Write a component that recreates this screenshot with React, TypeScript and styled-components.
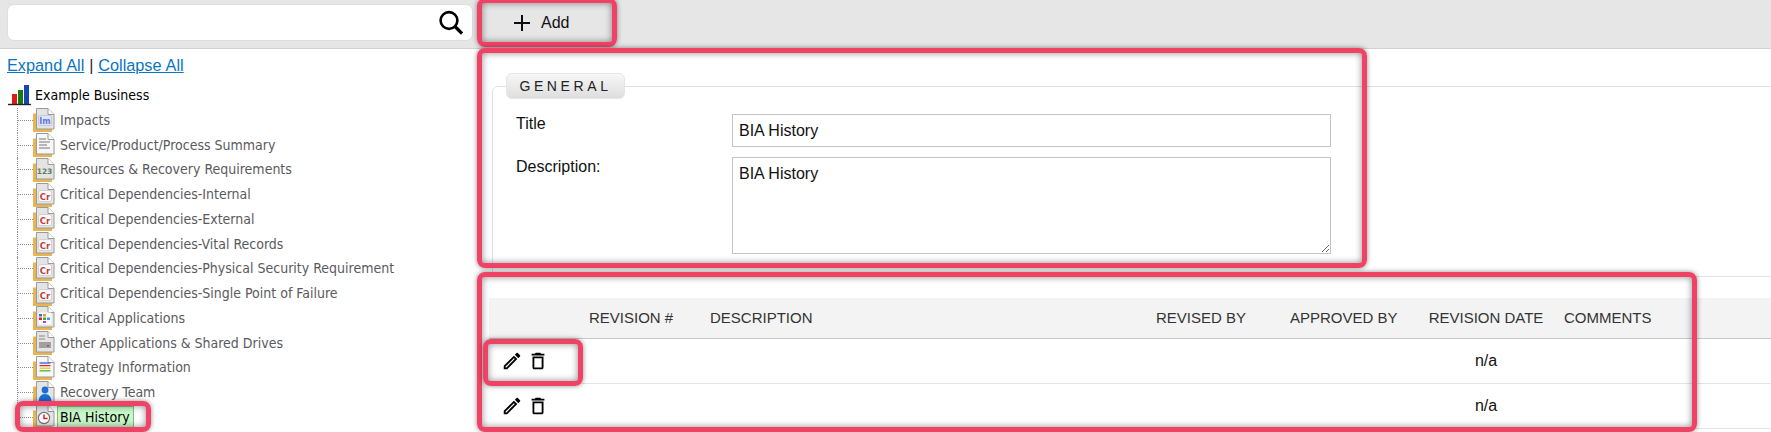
import React from 'react';
import styled, { createGlobalStyle } from 'styled-components';
import { MdOutlineEdit, MdOutlineDelete } from 'react-icons/md';

type IconKind =
  | 'impacts'
  | 'summary'
  | 'numbers'
  | 'critical'
  | 'apps'
  | 'drive'
  | 'strategy'
  | 'team'
  | 'history';

const GlobalStyle = createGlobalStyle`
  html, body {
    margin: 0;
    padding: 0;
    background: #fff;
  }
  * {
    box-sizing: border-box;
  }
`;

const Page = styled.div`
  position: relative;
  width: 1771px;
  height: 432px;
  overflow: hidden;
  background: #fff;
  color: #111;
  font-family: 'Liberation Sans', Arial, sans-serif;
  font-size: 16px;
`;

const Toolbar = styled.div`
  display: flex;
  align-items: center;
  height: 49px;
  background: #e6e6e6;
  border-bottom: 1px solid #d2d2d2;
`;

const SearchBox = styled.div`
  display: flex;
  align-items: center;
  width: 466px;
  height: 37px;
  margin: 0 0 4px 7px;
  padding: 0 9px 0 8px;
  background: #fff;
  border: 1px solid #dedede;
  border-radius: 7px;
`;

const SearchInput = styled.input`
  flex: 1;
  min-width: 0;
  border: 0;
  outline: 0;
  font: inherit;
  background: transparent;
`;

const AddButton = styled.button`
  display: flex;
  align-items: center;
  gap: 10px;
  margin: 0 0 2px 40px;
  padding: 0;
  border: 0;
  background: transparent;
  color: #111;
  font: inherit;
`;

const Body = styled.div`
  display: grid;
  grid-template-columns: 478px 1fr;
`;

const Sidebar = styled.aside`
  padding: 7px 0 0 0;
`;

const TreeLinks = styled.div`
  height: 20px;
  padding-left: 7px;
  line-height: 19px;
  color: #222;
  word-spacing: 0.4px;
`;

const TreeLink = styled.a`
  color: #0b74c4;
  font-size: 16.3px;
  text-decoration: underline;
`;

const TreeRoot = styled.div`
  display: flex;
  align-items: center;
  gap: 4px;
  height: 26px;
  margin-top: 6px;
  padding-left: 8px;
  color: #000;
`;

const TreeLabel = styled.span<{ $selected?: boolean }>`
  display: inline-block;
  height: 23px;
  padding: 0 3px 0 ${({ $selected }) => ($selected ? '2px' : '4px')};
  margin-left: ${({ $selected }) => ($selected ? '2px' : '0')};
  border: 1px solid ${({ $selected }) => ($selected ? '#7cc47c' : 'transparent')};
  background: ${({ $selected }) => ($selected ? '#c8f7c8' : 'transparent')};
  color: ${({ $selected }) => ($selected ? '#000' : '#5a5a5e')};
  line-height: 21px;
  white-space: nowrap;
  font-family: 'DejaVu Sans', sans-serif;
  font-stretch: condensed;
  font-size: 14px;
`;

const RootLabel = styled.span`
  font-family: 'DejaVu Sans', sans-serif;
  font-stretch: condensed;
  font-size: 14px;
`;

const TreeList = styled.ul`
  list-style: none;
  margin: 0 0 0 17px;
  padding: 0;
`;

const TreeRow = styled.li<{ $last?: boolean }>`
  display: flex;
  align-items: center;
  height: 24.75px;
  border-left: 1px dotted ${({ $last }) => ($last ? 'transparent' : '#8f8f8f')};
`;

const Connector = styled.span`
  width: 15px;
  height: 0;
  border-top: 1px dotted #8f8f8f;
`;

const Content = styled.main`
  min-width: 0;
`;

const General = styled.fieldset`
  margin: 24px -20px 0 14px;
  padding: 0 0 0 23px;
  height: 204px;
  border: 1px solid #e2e2e2;
  border-radius: 6px 0 0 0;
`;

const GeneralLegend = styled.legend`
  width: 119px;
  height: 26px;
  margin: 0 auto 0 -10px;
  padding: 0;
  background: linear-gradient(#f7f7f7, #dedede);
  border: 1px solid #e6e6e6;
  border-radius: 6px;
  color: #222;
  font-size: 14px;
  letter-spacing: 3.6px;
  line-height: 24px;
  text-align: center;
`;

const FormGrid = styled.div`
  display: grid;
  grid-template-columns: 216px 599px;
  grid-auto-rows: auto;
  row-gap: 10px;
  margin-top: 15px;
`;

const FieldLabel = styled.label`
  padding-top: 1px;
  line-height: 17px;
  color: #111;
`;

const TextInput = styled.input`
  width: 599px;
  height: 33px;
  padding: 0 6px;
  border: 1px solid #c4c4c4;
  outline: 0;
  color: #111;
  font: inherit;
`;

const TextArea = styled.textarea`
  display: block;
  width: 599px;
  height: 97px;
  padding: 7px 6px;
  border: 1px solid #c4c4c4;
  outline: 0;
  color: #111;
  font: inherit;
  line-height: 18px;
`;

const Table = styled.table`
  width: 1300px;
  margin: 21px 0 0 11px;
  table-layout: fixed;
  border-collapse: collapse;
`;

const HeadCell = styled.th<{ $width: number; $pad?: number; $center?: boolean }>`
  width: ${({ $width }) => $width}px;
  height: 40px;
  padding: 0 0 0 ${({ $pad }) => $pad ?? 0}px;
  background: #f3f3f3;
  border-bottom: 1px solid #c9c9c9;
  color: #333;
  font-size: 15px;
  font-weight: 400;
  text-align: ${({ $center }) => ($center ? 'center' : 'left')};
  white-space: nowrap;
`;

const Cell = styled.td<{ $center?: boolean }>`
  height: 45px;
  padding: 0;
  border-bottom: 1px solid #e4e4e4;
  color: #111;
  font-size: 16px;
  text-align: ${({ $center }) => ($center ? 'center' : 'left')};
`;

const RowActions = styled.div`
  display: flex;
  align-items: center;
  gap: 4px;
  padding-left: 12px;
  color: #000;
`;

const Callout = styled.div<{ $left: number; $top: number; $width: number; $height: number }>`
  position: absolute;
  left: ${({ $left }) => $left}px;
  top: ${({ $top }) => $top}px;
  width: ${({ $width }) => $width}px;
  height: ${({ $height }) => $height}px;
  border: 5px solid #ef4265;
  border-radius: 8px;
  box-shadow: 0 0 5px rgba(0, 0, 0, 0.45), inset 0 0 7px rgba(0, 0, 0, 0.45);
  pointer-events: none;
`;

const SearchIcon = () => (
  <svg width="26" height="28" viewBox="0 0 26 28" fill="none">
    <circle cx="12" cy="12.5" r="8.4" stroke="#000" strokeWidth="2.6" />
    <path d="M18 18.5l7 7" stroke="#000" strokeWidth="3.2" />
  </svg>
);

const PlusIcon = () => (
  <svg width="18" height="18" viewBox="0 0 18 18">
    <path d="M9 1v16M1 9h16" stroke="#0c0c14" strokeWidth="2" />
  </svg>
);

const BusinessIcon = () => (
  <svg width="23" height="21" viewBox="0 0 23 21">
    <rect x="4" y="9" width="5" height="10" fill="#e01818" />
    <rect x="10" y="5" width="5" height="14" fill="#167a16" />
    <rect x="16" y="0" width="5" height="19" fill="#1646b0" />
    <path d="M0 19.5h23" stroke="#222" strokeWidth="1.4" />
  </svg>
);

const glyphFont = "'DejaVu Sans', sans-serif";

const Glyph = ({ kind }: { kind: IconKind }) => {
  switch (kind) {
    case 'impacts':
      return (
        <>
          <rect x="5.5" y="7.5" width="13" height="10" rx="1" fill="#dfe4f8" stroke="#b8b8c8" strokeWidth="0.6" />
          <text x="12" y="15.5" fontSize="8" fontWeight="700" textAnchor="middle" fill="#6078dc" fontFamily={glyphFont}>
            Im
          </text>
        </>
      );
    case 'numbers':
      return (
        <text x="11.5" y="15.5" fontSize="7.5" fontWeight="700" textAnchor="middle" fill="#5e8060" fontFamily={glyphFont}>
          123
        </text>
      );
    case 'critical':
      return (
        <>
          <rect x="5.5" y="7.5" width="13" height="11" rx="2" fill="#fbfbfb" stroke="#c4c4c4" strokeWidth="0.7" />
          <text x="12" y="16.5" fontSize="8.5" fontWeight="700" textAnchor="middle" fill="#c44040" fontFamily={glyphFont}>
            Cr
          </text>
        </>
      );
    case 'summary':
      return <path d="M6 6h7M6 9h11M6 12h8M6 15h11" stroke="#777" strokeWidth="1" />;
    case 'apps':
      return (
        <>
          <rect x="5.5" y="6.5" width="13" height="12" rx="1" fill="#fbfbfb" />
          <rect x="6" y="8" width="3" height="2.5" fill="#3a6de0" />
          <rect x="10" y="8" width="3" height="2.5" fill="#e8a020" />
          <rect x="6" y="11.5" width="3" height="2.5" fill="#e02020" />
          <rect x="10" y="11.5" width="3" height="2.5" fill="#2fae3f" />
          <rect x="14" y="11.5" width="3" height="2.5" fill="#3aa0e0" />
          <rect x="10" y="15" width="3" height="2" fill="#c040c0" />
        </>
      );
    case 'drive':
      return (
        <>
          <path d="M6 5h6M6 8h6" stroke="#888" strokeWidth="1" />
          <rect x="6" y="11" width="12" height="6" fill="#a0a0a0" />
          <rect x="14" y="14" width="2" height="1.5" fill="#c04040" />
        </>
      );
    case 'strategy':
      return (
        <>
          <path d="M6.5 7h11" stroke="#2e62d8" strokeWidth="1.3" />
          <path d="M6.5 9.6h11" stroke="#e02828" strokeWidth="1.3" />
          <path d="M6.5 12.2h11" stroke="#f0c020" strokeWidth="1.3" />
          <path d="M6.5 14.8h11" stroke="#40b840" strokeWidth="1.3" />
        </>
      );
    case 'team':
      return (
        <>
          <circle cx="12" cy="9" r="3.4" fill="#1a6fd8" />
          <path d="M5.5 21c0-5 2.5-8 6.5-8s6.5 3 6.5 8z" fill="#1a6fd8" />
        </>
      );
    case 'history':
      return (
        <>
          <circle cx="11" cy="13" r="5.6" fill="#fff" stroke="#777" strokeWidth="1.2" />
          <path d="M11 9.6V13.4h3.6" fill="none" stroke="#e02020" strokeWidth="1.5" />
        </>
      );
  }
};

const TreeIcon = ({ kind }: { kind: IconKind }) => (
  <svg width="22" height="24" viewBox="0 0 22 24">
    <path d="M0 5.5h3V21h16v3H1a1 1 0 0 1-1-1z" fill="#e9b552" />
    <path d="M3.5.5H15l6 6V21H3.5z" fill={kind === 'summary' || kind === 'strategy' ? '#f7f7f7' : '#e4e4e4'} stroke="#9a9a9a" />
    <path d="M15 .5v6h6" fill="#fff" stroke="#9a9a9a" />
    <Glyph kind={kind} />
  </svg>
);

const treeItems: { label: string; icon: IconKind }[] = [
  { label: 'Impacts', icon: 'impacts' },
  { label: 'Service/Product/Process Summary', icon: 'summary' },
  { label: 'Resources & Recovery Requirements', icon: 'numbers' },
  { label: 'Critical Dependencies-Internal', icon: 'critical' },
  { label: 'Critical Dependencies-External', icon: 'critical' },
  { label: 'Critical Dependencies-Vital Records', icon: 'critical' },
  { label: 'Critical Dependencies-Physical Security Requirement', icon: 'critical' },
  { label: 'Critical Dependencies-Single Point of Failure', icon: 'critical' },
  { label: 'Critical Applications', icon: 'apps' },
  { label: 'Other Applications & Shared Drives', icon: 'drive' },
  { label: 'Strategy Information', icon: 'strategy' },
  { label: 'Recovery Team', icon: 'team' },
  { label: 'BIA History', icon: 'history' },
];

const columns = [
  { label: '', width: 100 },
  { label: 'REVISION #', width: 121 },
  { label: 'DESCRIPTION', width: 446 },
  { label: 'REVISED BY', width: 134 },
  { label: 'APPROVED BY', width: 138 },
  { label: 'REVISION DATE', width: 116, center: true },
  { label: 'COMMENTS', width: 245, pad: 20 },
];

function App() {
  return (
    <Page>
      <GlobalStyle />
      <Toolbar>
        <SearchBox>
          <SearchInput aria-label="Search" />
          <SearchIcon />
        </SearchBox>
        <AddButton>
          <PlusIcon />
          Add
        </AddButton>
      </Toolbar>
      <Body>
        <Sidebar>
          <TreeLinks>
            <TreeLink href="#">Expand All</TreeLink> | <TreeLink href="#">Collapse All</TreeLink>
          </TreeLinks>
          <TreeRoot>
            <BusinessIcon />
            <RootLabel>Example Business</RootLabel>
          </TreeRoot>
          <TreeList>
            {treeItems.map((item, i) => {
              const last = i === treeItems.length - 1;
              return (
                <TreeRow key={item.label} $last={last}>
                  <Connector />
                  <TreeIcon kind={item.icon} />
                  <TreeLabel $selected={last}>{item.label}</TreeLabel>
                </TreeRow>
              );
            })}
          </TreeList>
        </Sidebar>
        <Content>
          <General>
            <GeneralLegend>GENERAL</GeneralLegend>
            <FormGrid>
              <FieldLabel>Title</FieldLabel>
              <TextInput defaultValue="BIA History" />
              <FieldLabel>Description:</FieldLabel>
              <TextArea defaultValue="BIA History" />
            </FormGrid>
          </General>
          <Table>
            <thead>
              <tr>
                {columns.map((col) => (
                  <HeadCell key={col.label} $width={col.width} $pad={col.pad} $center={col.center}>
                    {col.label}
                  </HeadCell>
                ))}
              </tr>
            </thead>
            <tbody>
              {[0, 1].map((row) => (
                <tr key={row}>
                  <Cell>
                    <RowActions>
                      <MdOutlineEdit size={22} />
                      <MdOutlineDelete size={22} />
                    </RowActions>
                  </Cell>
                  <Cell />
                  <Cell />
                  <Cell />
                  <Cell />
                  <Cell $center>n/a</Cell>
                  <Cell />
                </tr>
              ))}
            </tbody>
          </Table>
        </Content>
      </Body>
      <Callout $left={477} $top={-2} $width={140} $height={49} />
      <Callout $left={477} $top={48} $width={890} $height={220} />
      <Callout $left={477} $top={272} $width={1220} $height={160} />
      <Callout $left={483} $top={339} $width={100} $height={47} />
      <Callout $left={15} $top={401} $width={136} $height={31} />
    </Page>
  );
}

export default App;
